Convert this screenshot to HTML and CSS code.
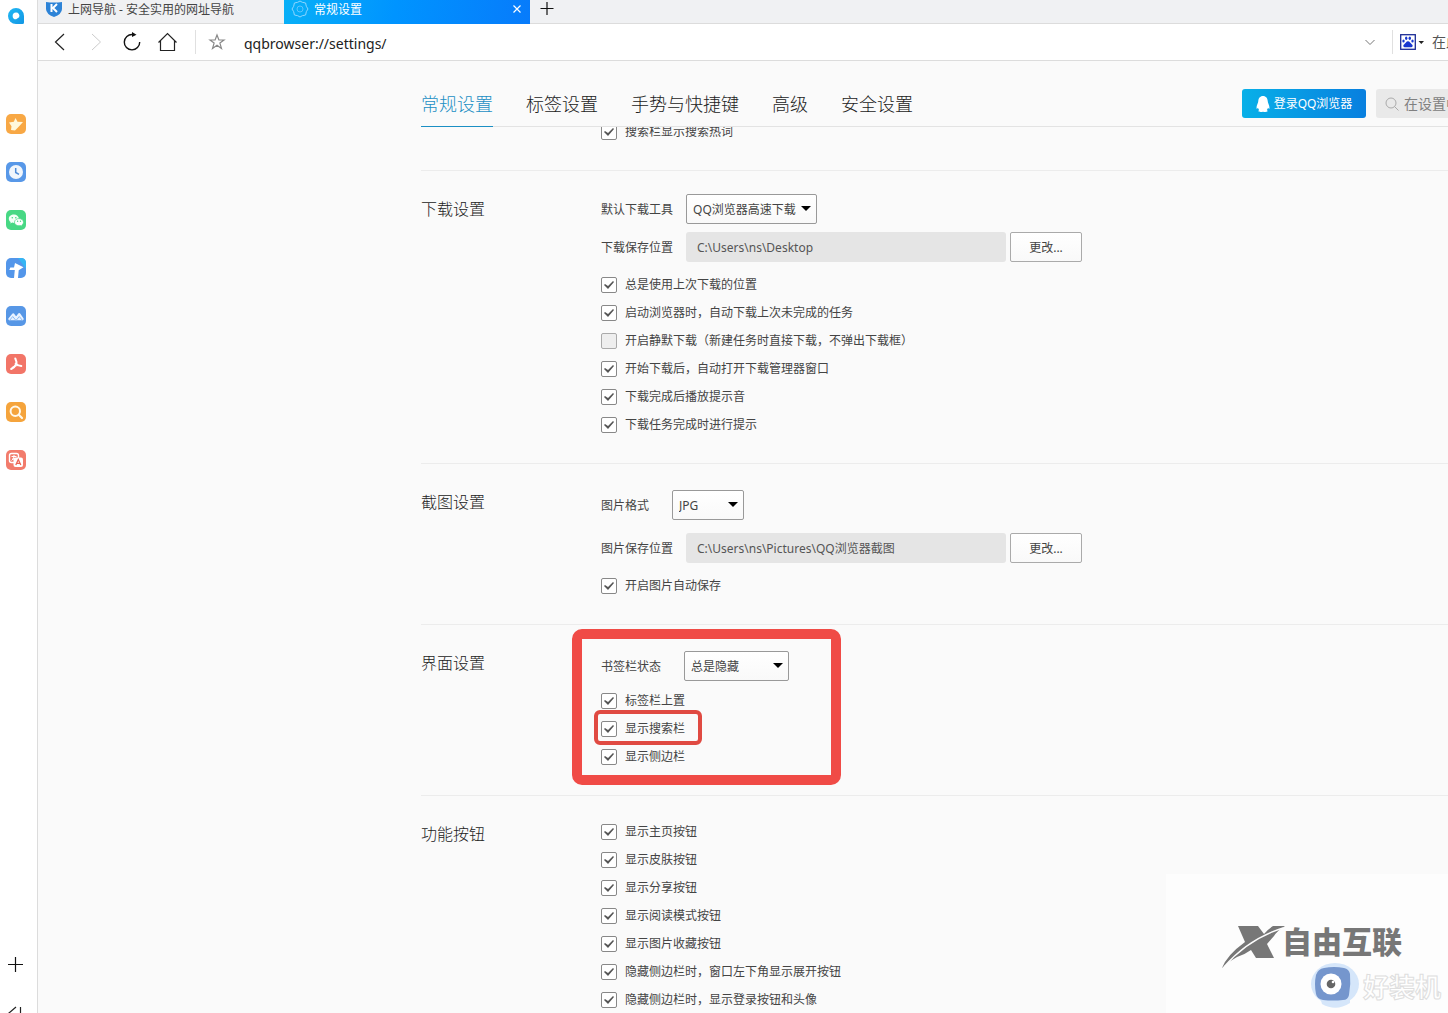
FILE: index.html
```html
<!DOCTYPE html>
<html lang="zh-CN">
<head>
<meta charset="utf-8">
<title>常规设置</title>
<link rel="stylesheet" href="styles.css">
</head>
<body>
<aside class="sidebar">
  <button class="side-logo" aria-label="QQ浏览器"><svg width="20" height="20" viewBox="0 0 20 20"><defs><linearGradient id="logo" x2="1" y2="1"><stop stop-color="#22b8f4"/><stop offset="1" stop-color="#1296e4"/></linearGradient></defs><path d="M10 2a8 8 0 1 0 0 16h6.500q1.500 0 1.500-1.500V10a8 8 0 0 0-8-8zm0 4.500a3.300 3.300 0 0 1 3.100 4.700l-3 2.100A3.400 3.400 0 1 1 10 6.500z" fill="url(#logo)" fill-rule="evenodd"/></svg></button>
  <button class="side-item" aria-label="收藏"><svg width="20" height="20" viewBox="0 0 20 20"><rect width="20" height="20" rx="5" fill="#f8a845"/><path d="M9.500 4l2 3.700 5.500.3-3.600 4-4.400 4.600-4-.6.500-3.700L3 8.600l4.800-.8z" fill="#fff8dc"/></svg></button>
  <button class="side-item" aria-label="历史"><svg width="20" height="20" viewBox="0 0 20 20"><rect width="20" height="20" rx="5" fill="#5898e8"/><circle cx="10" cy="10" r="7" fill="#f1f6fc"/><path d="M9.700 6v4.500l3.300 1.800" fill="none" stroke="#4f8cd8" stroke-width="1.500"/></svg></button>
  <button class="side-item" aria-label="微信"><svg width="20" height="20" viewBox="0 0 20 20"><rect width="20" height="20" rx="5" fill="#47d884"/><path d="M8 4.500c-3 0-5.200 1.900-5.200 4.200 0 1.400.7 2.500 1.900 3.300l-.4 1.600 2-1 1.700.3 5-4.200C12.500 6.200 10.700 4.500 8 4.500z" fill="#f2fff7"/><path d="M13 8.600c-2.500 0-4.500 1.600-4.500 3.600s2 3.600 4.500 3.600l1.500-.2 1.700.9-.4-1.500c1.100-.7 1.700-1.700 1.700-2.800 0-2-2-3.600-4.500-3.600z" fill="#fff" stroke="#47d884" stroke-width=".7"/><g fill="#47d884"><circle cx="6.300" cy="7.700" r=".8"/><circle cx="9.800" cy="7.700" r=".8"/><circle cx="11.600" cy="11.300" r=".7"/><circle cx="14.500" cy="11.300" r=".7"/></g></svg></button>
  <button class="side-item" aria-label="导航"><svg width="20" height="20" viewBox="0 0 20 20"><rect width="20" height="20" rx="5" fill="#5396ea"/><path d="M12 0h3q5 0 5 5v6z" fill="#35b5f3"/><path d="M9 5l8.500 4.300-4.800 3-.7 7.700H8l.8-8H3.300l1-2.500H8z" fill="#fff"/></svg></button>
  <button class="side-item" aria-label="脑图"><svg width="20" height="20" viewBox="0 0 20 20"><rect width="20" height="20" rx="5" fill="#5797e6"/><path d="M3.500 13l3.700-4.500 3 4 3-4.300 3.300 4.800z" fill="#eaf3ff" stroke="#eaf3ff" stroke-width="2.400" stroke-linejoin="round" stroke-linecap="round"/><path d="M3.500 14.500l3.200-4 3.300 4 3.300-4 3.200 4" fill="none" stroke="#8dbcf3"/></svg></button>
  <button class="side-item" aria-label="PDF"><svg width="20" height="20" viewBox="0 0 20 20"><rect width="20" height="20" rx="5" fill="#f27568"/><path d="M9.300 4.500q1.700 3.500.9 5.700Q8.500 13.500 5.200 15M9.700 9.500q2.300 2.500 5.600 2.500" fill="none" stroke="#fff" stroke-width="2" stroke-linecap="round"/><path d="M6 13.500q3-2 6-2" stroke="#fff" fill="none"/></svg></button>
  <button class="side-item" aria-label="搜索"><svg width="20" height="20" viewBox="0 0 20 20"><rect width="20" height="20" rx="5" fill="#f5a43c"/><circle cx="9.300" cy="9.300" r="4.700" fill="#f5a43c" stroke="#fff8ea" stroke-width="2"/><path d="M12.800 12.800l3.200 3.200" stroke="#fff8ea" stroke-width="2.200" stroke-linecap="round"/></svg></button>
  <button class="side-item" aria-label="翻译"><svg width="20" height="20" viewBox="0 0 20 20"><rect width="20" height="20" rx="5" fill="#f27c6c"/><rect x="3.500" y="3.500" width="9" height="9" rx="2" fill="none" stroke="#fff" stroke-width="1.400"/><path d="M5.500 6.500h5M8 5v1.500q0 2.500-2.500 4M6.500 8l2 2" stroke="#fff" fill="none"/><rect x="7.500" y="7.500" width="9.500" height="9.500" rx="2" fill="#fff"/><path d="M9.800 15l2.500-5.500 2.500 5.500M10.500 13.400h3.600" fill="none" stroke="#ec6656" stroke-width="1.300"/></svg></button>
  <button class="side-item side-add" aria-label="添加"><svg width="20" height="20" viewBox="0 0 20 20"><path d="M2 9.500h15M9.500 2v15" stroke="#111" stroke-width="1.200"/></svg></button>
  <button class="side-item side-fold" aria-label="收起"><svg width="20" height="20" viewBox="0 0 20 20"><path d="M10 4l-7 6 7 6M14.500 4v12" stroke="#222" stroke-width="1.200" fill="none"/></svg></button>
</aside>
<div class="window">
  <header class="tabstrip">
    <a class="tab" href="#home"><svg width="18" height="18" viewBox="0 0 18 18"><path d="M1 2q8 1 16 0v7q0 5-8 8-8-3-8-8z" fill="#2d83d7"/><path d="M6.500 4v8M12 4l-4 4 4 4" stroke="#fff" stroke-width="2" fill="none"/></svg><span>上网导航 - 安全实用的网址导航</span></a>
    <a class="tab tab-active" href="#settings"><svg width="18" height="18" viewBox="0 0 18 18"><path d="M9 1l2.300 1.300 3.300.7.700 3.300L17 9l-1.700 2.700-.7 3.300-3.300.7L9 17l-2.300-1.300-3.300-.7-.7-3.300L1 9l1.700-2.700.7-3.300 3.300-.7z" fill="none" stroke="#8fd6ff"/><circle cx="9" cy="9" r="3" fill="none" stroke="#5cc4ff"/></svg><span>常规设置</span><svg class="tab-close" width="10" height="18" viewBox="0 0 10 18"><path d="M1.500 5.500l7 7m0-7l-7 7" stroke="#fff" stroke-width="1.200"/></svg></a>
    <button class="new-tab" aria-label="新建标签页"><svg width="14" height="18" viewBox="0 0 14 18"><path d="M.5 8.500h13M7 2v13" stroke="#111" stroke-width="1.200"/></svg></button>
  </header>
  <div class="toolbar">
    <button class="tool" aria-label="后退"><svg width="20" height="20" viewBox="0 0 20 20"><path d="M14 2L5.500 10l8.500 8" fill="none" stroke="#222" stroke-width="1.200"/></svg></button>
    <button class="tool" aria-label="前进"><svg width="20" height="20" viewBox="0 0 20 20"><path d="M6 2l8.500 8L6 18" fill="none" stroke="#ccc"/></svg></button>
    <button class="tool" aria-label="刷新"><svg width="20" height="20" viewBox="0 0 20 20"><path d="M10.500 2.500A7.700 7.700 0 1 0 17.700 10" fill="none" stroke="#111" stroke-width="1.400"/><path d="M10 0v5l4.500-2.200z" fill="#111"/></svg></button>
    <button class="tool" aria-label="主页"><svg width="20" height="20" viewBox="0 0 20 20"><path d="M.5 10.500L9.500 1.500l9 9M2.500 9v9.500h14V9" fill="none" stroke="#222" stroke-width="1.200"/></svg></button>
    <span class="divider"></span>
    <button class="tool star" aria-label="收藏此页"><svg width="20" height="20" viewBox="0 0 20 20"><path d="M10 3l1.900 5h5.100l-4.100 3.100 1.600 5.400L10 13.300l-4.500 3.200 1.600-5.400L3 8h5.100z" fill="none" stroke="#888" stroke-width="1.200"/></svg></button>
    <input class="address" type="text" aria-label="地址" value="qqbrowser://settings/">
    <button class="expand" aria-label="展开"><svg width="12" height="12" viewBox="0 0 12 12"><path d="M1.500 4L6 8.500 10.500 4" fill="none" stroke="#777"/></svg></button>
    <span class="divider"></span>
    <button class="engine" aria-label="百度搜索"><svg width="26" height="18" viewBox="0 0 26 18"><rect x=".7" y="1.700" width="14.600" height="14.600" fill="#fff" stroke="#1c2c96" stroke-width="1.300"/><g fill="#1737d0"><ellipse cx="3.500" cy="8" rx="1.200" ry="1.600"/><ellipse cx="6.200" cy="5.200" rx="1.200" ry="1.700"/><ellipse cx="9.800" cy="5.200" rx="1.200" ry="1.700"/><ellipse cx="12.500" cy="8" rx="1.200" ry="1.600"/><path d="M8 8.200c1.800 0 2.400 2 3.700 3 1.800 1.500.9 3-1 3H5.300c-1.900 0-2.800-1.500-1-3 1.300-1 1.900-3 3.700-3z"/></g><path d="M18.500 8h5.500l-2.700 3z" fill="#222"/></svg></button>
    <input class="web-search" type="search" aria-label="搜索" placeholder="在此搜索">
  </div>
  <main class="page">
    <div class="page-head">
      <nav class="page-nav">
        <a class="current" href="#general">常规设置</a>
        <a href="#tabs">标签设置</a>
        <a href="#gestures">手势与快捷键</a>
        <a href="#advanced">高级</a>
        <a href="#security">安全设置</a>
      </nav>
      <button class="login"><svg width="14" height="18" viewBox="0 0 14 18"><path d="M7 1C4 1 2.300 3.500 2.300 6c0 2-1.900 4-1.800 7.300.1 1 .8.500 1.500-.6.200.9.600 1.600 1.200 2.200-.6.300-.8.800-.8 1.200.3 1.200 3 1 4.600.6 1.600.4 4.300.6 4.600-.6 0-.4-.2-.9-.8-1.200.6-.6 1-1.300 1.200-2.200.7 1.100 1.400 1.600 1.500.6C13.600 10 11.700 8 11.700 6 11.700 3.500 10 1 7 1z" fill="#fff"/></svg>登录QQ浏览器</button>
      <label class="find"><svg width="16" height="16" viewBox="0 0 16 16"><circle cx="7" cy="7" r="5" fill="none" stroke="#aaa"/><path d="M10.500 10.500l4 4" stroke="#aaa"/></svg><input type="search" aria-label="在设置中搜索" placeholder="在设置中搜索"></label>
    </div>
    <div class="scroll">
      <section class="group group-scrolled">
        <div class="options">
          <label class="check"><input type="checkbox" checked>搜索栏显示搜索热词</label>
        </div>
      </section>
      <section class="group">
        <h2>下载设置</h2>
        <div class="options">
          <div class="fields">
            <div class="field"><label for="tool">默认下载工具</label><span class="select select-wide"><select id="tool"><option>QQ浏览器高速下载</option></select></span></div>
            <div class="field"><label for="dl">下载保存位置</label><input class="path" id="dl" type="text" readonly value="C:\Users\ns\Desktop"><button class="change">更改...</button></div>
          </div>
          <label class="check"><input type="checkbox" checked>总是使用上次下载的位置</label>
          <label class="check"><input type="checkbox" checked>启动浏览器时，自动下载上次未完成的任务</label>
          <label class="check"><input type="checkbox">开启静默下载（新建任务时直接下载，不弹出下载框）</label>
          <label class="check"><input type="checkbox" checked>开始下载后，自动打开下载管理器窗口</label>
          <label class="check"><input type="checkbox" checked>下载完成后播放提示音</label>
          <label class="check"><input type="checkbox" checked>下载任务完成时进行提示</label>
        </div>
      </section>
      <section class="group">
        <h2>截图设置</h2>
        <div class="options">
          <div class="fields fields-roomy">
            <div class="field field-short"><label for="fmt">图片格式</label><span class="select select-small"><select id="fmt"><option>JPG</option></select></span></div>
            <div class="field"><label for="pic">图片保存位置</label><input class="path" id="pic" type="text" readonly value="C:\Users\ns\Pictures\QQ浏览器截图"><button class="change">更改...</button></div>
          </div>
          <label class="check"><input type="checkbox" checked>开启图片自动保存</label>
        </div>
      </section>
      <section class="group">
        <h2>界面设置</h2>
        <div class="options marked">
          <div class="fields fields-single">
            <div class="field field-short"><label for="bar">书签栏状态</label><span class="select"><select id="bar"><option>总是隐藏</option></select></span></div>
          </div>
          <label class="check"><input type="checkbox" checked>标签栏上置</label>
          <label class="check check-marked"><input type="checkbox" checked>显示搜索栏</label>
          <label class="check"><input type="checkbox" checked>显示侧边栏</label>
        </div>
      </section>
      <section class="group">
        <h2>功能按钮</h2>
        <div class="options">
          <label class="check"><input type="checkbox" checked>显示主页按钮</label>
          <label class="check"><input type="checkbox" checked>显示皮肤按钮</label>
          <label class="check"><input type="checkbox" checked>显示分享按钮</label>
          <label class="check"><input type="checkbox" checked>显示阅读模式按钮</label>
          <label class="check"><input type="checkbox" checked>显示图片收藏按钮</label>
          <label class="check"><input type="checkbox" checked>隐藏侧边栏时，窗口左下角显示展开按钮</label>
          <label class="check"><input type="checkbox" checked>隐藏侧边栏时，显示登录按钮和头像</label>
        </div>
      </section>
    </div>
  </main>
</div>
<div class="watermark">
  <svg width="282" height="139" viewBox="0 0 282 139">
    <path d="M72 52h20l6 8q4-5 9-8h12q-8 5-11 10l-7 8 7 14H90l-5-8q-7 5-14 7-8 4-15 11 5-13 23-26z" fill="#777"/>
    <path d="M58 93Q82 65 117 54" fill="none" stroke="#fdfdfd" stroke-width="1.400"/>
    <text class="mark-main" x="116" y="79">自由互联</text>
    <ellipse cx="169" cy="110" rx="24" ry="21" fill="#d5e6fa"/>
    <path d="M154 123h30v6q-14 9-28 1z" fill="#d5e6fa"/>
    <path d="M158 94q10-2 20 0 5 1 6 6 1 10-1 21-1 5-6 5-10 1-20 0-6-1-7-6-2-10 0-19 2-6 8-7z" fill="#7596cd"/>
    <circle cx="165" cy="110" r="10.500" fill="#fff"/>
    <circle cx="165" cy="110" r="4.300" fill="#666"/><circle cx="167" cy="108" r="1.300" fill="#fff"/>
    <text class="mark-sub" x="197" y="123">好装机</text>
  </svg>
</div>
</body>
</html>
```
FILE: styles.css
```css
*, *::before, *::after { box-sizing: border-box; }

body {
  margin: 0;
  height: 100vh;
  display: flex;
  overflow: hidden;
  position: relative;
  background: #fafafa;
  color: #444;
  font: 12px/18px "Noto Sans", "Noto Sans CJK SC", sans-serif;
}

button, input, select { font: inherit; color: inherit; margin: 0; }
button { padding: 0; border: 0; background: none; }
a { color: inherit; text-decoration: none; }
svg { display: block; flex: none; }

.sidebar {
  flex: none;
  width: 38px;
  display: flex;
  flex-direction: column;
  padding-left: 6px;
  background: #fff;
  border-right: 1px solid #dcdcdc;
}
.side-logo { flex: none; height: 32px; margin-bottom: 68px; }
.side-item { flex: none; height: 48px; }
.side-add { margin-top: auto; }
.side-fold { margin-bottom: -24px; }

.window { flex: 1; min-width: 0; display: flex; flex-direction: column; overflow: hidden; }

.tabstrip {
  flex: none;
  height: 24px;
  display: flex;
  background: #f0f1f3;
  border-bottom: 1px solid #dcdcdc;
}
.tab {
  display: flex;
  gap: 5px;
  width: 246px;
  height: 24px;
  padding: 0 8px 0 7px;
  line-height: 20px;
}
.tab-active { color: #fff; background: linear-gradient(100deg, #08b0f7, #0094ff 45%, #077bfb); }
.tab-close { margin-left: auto; }
.new-tab { width: 34px; height: 18px; display: grid; place-items: center; }

.toolbar {
  flex: none;
  height: 37px;
  display: flex;
  align-items: center;
  margin-right: -100px;
  padding-left: 4px;
  background: #fff;
  border-bottom: 1px solid #dcdcdc;
}
.tool { width: 36px; height: 36px; display: grid; place-items: center; }
.divider { width: 1px; height: 24px; margin: 0 7px 0 9px; background: #e0e0e0; }
.star { width: 28px; }
.address {
  flex: 1;
  min-width: 0;
  height: 26px;
  padding: 2px 8px 0 13px;
  border: 0;
  color: #222;
  font-size: 14px;
  line-height: 24px;
}
.expand { padding: 0 7px; }
.engine { width: 32px; }
.web-search { width: 116px; padding: 0; border: 0; font-size: 14px; }
.web-search::placeholder { color: #555; opacity: 1; }

.page {
  flex: 1;
  min-height: 0;
  display: flex;
  flex-direction: column;
  padding-left: 383px;
  margin-right: -108px;
}
.page-head {
  flex: none;
  height: 66px;
  display: flex;
  align-items: flex-end;
  gap: 10px;
  border-bottom: 1px solid #e3e3e3;
}
.page-nav { flex: 1; display: flex; gap: 33px; font-size: 18px; font-weight: 300; color: #222; }
.page-nav a { height: 47px; margin-bottom: -1px; line-height: 48px; white-space: nowrap; }
.page-nav .current { color: #1b8fc4; border-bottom: 1px solid #1b8fc4; }
.login {
  flex: none;
  width: 124px;
  height: 29px;
  margin-bottom: 8px;
  display: flex;
  align-items: center;
  justify-content: center;
  gap: 4px;
  border-radius: 3px;
  color: #fff;
  background: linear-gradient(90deg, #08b0e8, #087fdf);
}
.find {
  flex: none;
  width: 180px;
  height: 29px;
  margin-bottom: 8px;
  display: flex;
  align-items: center;
  gap: 4px;
  padding-left: 8px;
  border-radius: 3px;
  background: #e9e9e9;
}
.find input { width: 140px; padding: 0; border: 0; background: none; font-size: 14px; }
.find input::placeholder { color: #808080; opacity: 1; }

.scroll { flex: 1; min-height: 0; overflow: hidden; }
.group {
  display: grid;
  grid-template-columns: 180px 1fr;
  padding: 22px 0 24px;
  border-bottom: 1px solid #ececec;
}
.group-scrolled { padding-top: 0; margin-top: -9px; }
.group-scrolled .options { grid-column: 2; }
h2 { margin: 0; font-size: 16px; line-height: 32px; font-weight: 300; color: #222; }
.options { display: flex; flex-direction: column; align-items: flex-start; }
.fields { display: grid; gap: 8px; padding: 1px 0 9px; }
.fields-roomy { gap: 13px; padding-top: 4px; }
.fields-single { padding: 4px 0 6px; }
.field { display: flex; align-items: center; height: 30px; }
.field label { margin-right: 13px; line-height: 20px; padding-top: 2px; }
.field-short label { margin-right: 23px; }

.select { position: relative; display: flex; width: 105px; }
.select-wide { width: 131px; }
.select-small { width: 72px; }
.select::after {
  content: "";
  position: absolute;
  right: 6px;
  top: 12px;
  border: 5px solid transparent;
  border-top-color: #000;
  border-bottom: 0;
  pointer-events: none;
}
.select select {
  appearance: none;
  width: 100%;
  height: 30px;
  padding: 2px 6px 0;
  border: 1px solid #999;
  border-radius: 2px;
  background: linear-gradient(#fff, #f9f9f9);
}
.path {
  width: 320px;
  height: 30px;
  margin-right: 4px;
  padding: 0 11px;
  border: 0;
  border-radius: 3px;
  background: #e5e5e5;
  color: #555;
}
.change {
  width: 72px;
  height: 30px;
  padding-top: 2px;
  border: 1px solid #aaa;
  border-radius: 2px;
  background: linear-gradient(#fff, #f9f9f9);
}

.check { display: flex; align-items: center; gap: 8px; height: 28px; white-space: nowrap; }
.check input {
  appearance: none;
  width: 16px;
  height: 16px;
  border: 1px solid #aaa;
  border-radius: 2px;
  background: #eee;
}
.check input:checked { border-color: #888; background: #fff; }
.check input:checked::before {
  content: "";
  display: block;
  width: 14px;
  height: 14px;
  background: #555;
  clip-path: polygon(2px 7px, 3px 6px, 6px 8px, 11px 3px, 12px 4px, 6px 11px);
}

/* Highlight frames over the interface options */
.marked, .check-marked { position: relative; }
.marked::before, .check-marked::before { content: ""; position: absolute; pointer-events: none; }
.marked::before {
  left: -29px;
  top: -18px;
  width: 269px;
  height: 156px;
  border: 10px solid #f04b46;
  border-radius: 10px;
}
.check-marked::before { inset: -5px -17px -2px -7px; border: 4px solid #e04a42; border-radius: 6px; }

.watermark { position: absolute; right: 0; bottom: 0; background: #fdfdfd; }
.mark-main { font: 900 30px "Noto Sans CJK SC", sans-serif; fill: #777; }
.mark-sub { font: 700 26px "Noto Sans CJK SC", sans-serif; fill: #fff; stroke: #dedede; stroke-width: 1px; }
```
